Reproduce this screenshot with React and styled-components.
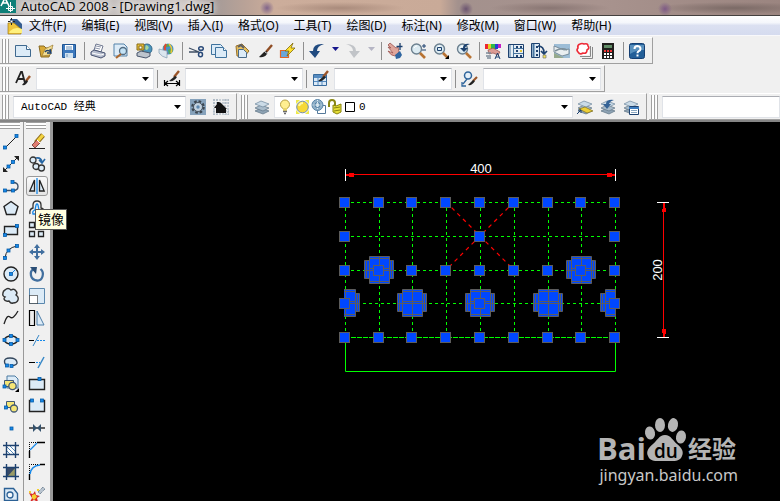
import React from "react";
import styled, { createGlobalStyle, css } from "styled-components";

const UI_FONT = '"Open Sans", "Noto Sans CJK SC", sans-serif';

const GlobalStyle = createGlobalStyle`
  * { box-sizing: border-box; }
  body { margin: 0; background: #f0f0f0; overflow: hidden; }
`;

/* ---------- shell ---------- */

const Window = styled.div`
  display: flex;
  flex-direction: column;
  height: 100vh;
  background: #f0f0f0;
  color: #000;
  font: 12px/18px ${UI_FONT};
`;

const TitleBar = styled.header`
  display: flex;
  align-items: flex-start;
  gap: 5px;
  height: 15px;
  flex: none;
  background:
    radial-gradient(circle at 267px 8px, #80648a 0, transparent 7px),
    radial-gradient(circle at 466px 9px, #6b5470 0, transparent 7px),
    radial-gradient(circle at 665px 9px, #7e5a86 0, transparent 7px),
    radial-gradient(ellipse 65px 6px at 340px 8px, #a98b7c 0, transparent 100%),
    radial-gradient(ellipse 60px 6px at 550px 8px, #897673 0, transparent 100%),
    radial-gradient(ellipse 80px 6px at 735px 8px, #7b6a66 0, transparent 100%),
    linear-gradient(90deg, #bdb9b8 0, #cbc4c1 190px, #a59b98 215px, #b9a297 245px, #ccad9b 275px, #c9aa98 440px, #a3918d 458px, #a8938e 600px, #9b8580 100%);
`;

const TitleIcon = styled.span`
  display: flex;
  align-items: flex-end;
  height: 13px;
  overflow: hidden;
`;

const TitleText = styled.h1`
  margin: 0;
  font: 13px/12px ${UI_FONT};
  white-space: nowrap;
  text-shadow: 0 0 6px #fff, 0 0 8px #fff;
`;

const MenuBar = styled.nav`
  display: flex;
  align-items: center;
  gap: 15px;
  height: 21px;
  flex: none;
  padding-left: 7px;
  border-top: 1px solid #44403f;
  border-bottom: 1px solid #f8f8fb;
  background: linear-gradient(#fff 0, #f4f6fb 35%, #dbe0f1 50%, #d5dbef 100%);
`;

const MenuButton = styled.button`
  border: 0;
  padding: 0;
  background: none;
  font: 12px/16px "Noto Sans", "Noto Sans CJK SC", sans-serif;
  white-space: nowrap;
`;

const DocIcon = styled.span`
  display: flex;
  margin-right: -9px;
`;

const ToolRows = styled.div`
  display: flex;
  flex-direction: column;
  gap: 1px;
  flex: none;
  padding-top: 1px;
  border-bottom: 2px solid #858585;
`;

const ToolRow = styled.div`
  display: flex;
  gap: 2px;
  height: 27px;
`;

const ToolBar = styled.div`
  display: flex;
  align-items: center;
  padding-left: 2px;
  padding-right: ${(p) => p.$end || 0}px;
  border-top: 1px solid #fff;
  border-bottom: 1px solid #a0a0a0;
  border-right: 1px solid #a0a0a0;
  ${(p) => p.$grow && css`flex: 1; border-right: 0;`}
`;

const Grip = styled.span`
  flex: none;
  width: 7px;
  height: 24px;
  margin-right: ${(p) => p.$gap}px;
  border: solid #a0a0a0;
  border-width: 0 1px;
  background: linear-gradient(90deg, #fff 2px, #a0a0a0 2px, #a0a0a0 3px, #f0f0f0 3px, #fff 4px);
`;

const ToolButton = styled.button`
  display: flex;
  flex: none;
  width: ${(p) => p.$w || 23}px;
  height: 20px;
  padding: 2px 0;
  border: 0;
  background: none;
`;

const Separator = styled.span`
  flex: none;
  width: 1px;
  height: 18px;
  margin-right: ${(p) => p.$gap || 5}px;
  background: #8f8f8f;
`;

const Combo = styled.label`
  display: flex;
  align-items: center;
  flex: none;
  width: ${(p) => p.$w}px;
  height: 22px;
  padding-left: ${(p) => p.$pad || 0}px;
  margin-right: ${(p) => p.$gap || 0}px;
  border: 1px solid #e0e3e8;
  border-top-color: #abadb3;
  background: #fff;
  ${(p) => p.$grow && css`flex: 1; width: auto;`}
`;

const Select = styled.select`
  flex: 1;
  min-width: 0;
  height: 20px;
  padding: 0;
  border: 0;
  outline: 0;
  appearance: none;
  background: transparent;
  color: #000;
  font: 11px/18px "Liberation Mono", "Noto Sans CJK SC", monospace;
`;

const Arrow = styled.svg`
  flex: none;
  width: 7px;
  height: 4px;
  margin-right: 4px;
  pointer-events: none;
`;

const Workspace = styled.main`
  display: flex;
  flex: 1;
  min-height: 0;
`;

const Palette = styled.div`
  display: flex;
  flex-direction: column;
  flex: none;
  width: ${(p) => p.$w}px;
  padding-left: ${(p) => p.$pad}px;
  overflow: hidden;
  border-right: ${(p) => p.$edge}px solid #999;
`;

const PaletteGrip = styled.span`
  flex: none;
  width: 20px;
  height: 7px;
  margin-bottom: 2px;
  border: solid #a0a0a0;
  border-width: 1px 0;
  background: linear-gradient(#fff 2px, #a0a0a0 2px, #a0a0a0 3px, #fff 3px);
`;

const PaletteButton = styled.button`
  position: relative;
  display: flex;
  align-items: center;
  justify-content: center;
  flex: none;
  width: 22px;
  height: 22px;
  padding: 0;
  border: 1px solid transparent;
  border-radius: 3px;
  background: none;
  ${(p) => p.$hot && css`
    height: 20px;
    margin: 1px 0;
    border-color: #9a9a9a;
    background: linear-gradient(#fafafa, #e4e4e4);
  `}
`;

const Tooltip = styled.span`
  position: absolute;
  z-index: 2;
  left: 8px;
  top: 32px;
  padding: 0 2px;
  border: 1px solid #555;
  background: #ffffe1;
  font: 13px/19px ${UI_FONT};
  white-space: nowrap;
`;

const ModifyPalette = styled(Palette)`
  overflow: visible;
`;

const Canvas = styled.section`
  position: relative;
  flex: 1;
  min-width: 0;
  overflow: hidden;
  background: #000;
`;

const Drawing = styled.svg`
  display: block;
  width: 100%;
  height: 100%;
`;

const Watermark = styled.div`
  position: absolute;
  right: 42px;
  bottom: 14px;
  color: #c8c8c8;
  font: 16px/24px "Noto Sans", sans-serif;
`;

const WatermarkLogo = styled.svg`
  display: block;
  width: 138px;
  height: 46px;
  overflow: visible;
`;

/* ---------- icons ---------- */

const N = "#1d416f";
const B = "#1688e8";
const K = "#222";
const P = "#dcebf7";

const Dot = ({ x, y }) => <rect x={x - 1.5} y={y - 1.5} width="3" height="3" fill={B} stroke="#075ca8" strokeWidth=".8" />;

const lens = (
  <>
    <circle cx="6.5" cy="6" r="5" fill="#dcebf2" stroke="#6b7f8e" strokeWidth="1.4" />
    <path d="M10 10l5 5" stroke="#b87333" strokeWidth="2.6" />
    <path d="M4 5q1-2 3-2" fill="none" stroke="#fff" />
  </>
);
const brush = (
  <>
    <path d="M15 2l-6 7" stroke="#8f4d24" strokeWidth="2.4" />
    <path d="M10 8l-3 1q-2 2-5 5q5 1 8-3z" fill="#222" />
    <path d="M8 9l3 2" stroke="#c8c8c8" />
  </>
);
const sheets = (
  <>
    <path d="M1 12l6-3 8 3-6 3z" fill="#8ea3b4" stroke="#5f7485" strokeWidth=".7" />
    <path d="M1 9l6-3 8 3-6 3z" fill="#a9bccb" stroke="#5f7485" strokeWidth=".7" />
    <path d="M1 5l6-3 8 3-6 3z" fill="#cbdbe7" stroke="#6d879c" strokeWidth=".7" />
  </>
);
const hatchFrame = <path d="M3.500 0v16M12.500 0v16M0 3.500h16M0 12.500h16" stroke={N} strokeWidth="1.4" />;

const ICONS = {
  acad: <><path d="M0 0h16v16H0z" fill="#0e7f78" /><path d="M1 9l4-8 4 8M3 6h5" stroke="#fff" fill="none" strokeWidth="1.6" /><path d="M10.500 5v10M6 11.500h9M8.500 9.500h4v4h-4z" stroke="#fff" fill="none" /></>,
  doc: <><path d="M3 1h7l5 5v9H3z" fill="#345c90" /><path d="M1 5h6l7 6v5H1z" fill="#efc43a" stroke="#a17b1d" strokeWidth=".7" /><path d="M3 13q5-5 12-2v4H2z" fill="#fff07d" /><path d="M4.500 0v7M1 3.500h7" stroke="#222" /><path d="M3.500 2.500h2v2h-2z" fill="#fff" /></>,
  new: <><path d="M.5 2.500h11l4 4v7H.5z" fill={P} stroke="#3f698f" /><path d="M11.500 2.500v4h4" fill="#fff" stroke="#3f698f" /></>,
  open: <><path d="M1 3h5l2 2h6l-3 9H3z" fill="#d8a936" stroke="#886a24" /><path d="M4 13L7 6l8-4-3 10z" fill="#f4df94" stroke="#9a7a30" strokeWidth=".7" /><path d="M7 9q2-3 6 0M12 6l1 4-4 0" fill="none" stroke={N} strokeWidth="1.4" /></>,
  save: <><path d="M1.500 1.500h13v13h-13z" fill="#3d79bd" stroke="#205593" /><path d="M4 2h8v5H4z" fill="#fff" /><path d="M4 10h8v5H4z" fill="#d1e2ef" /><path d="M5 4h6M5 6h6M6 11v3" stroke="#6a91b8" /></>,
  print: <><path d="M4 7l2-6 7 2-2 6z" fill="#fff" stroke="#6f7890" /><path d="M1 9l3-2 11 3v3l-4 2-10-3z" fill="#b6bdce" stroke="#485370" /><path d="M2 10l9 2 3-1" stroke="#fff" fill="none" /><path d="M6 3l5 1M5 5l5 1" stroke="#9199ad" /></>,
  preview: <><path d="M1 1h10l3 3v9H1z" fill={P} stroke="#5583aa" /><circle cx="10" cy="8" r="3.500" fill="#c3e2f5" stroke="#536d83" strokeWidth="1.3" /><path d="M8 11l-5 4" stroke="#ac672d" strokeWidth="2.200" /></>,
  publish: <><circle cx="11" cy="6" r="5" fill="#4b96bd" stroke="#35698b" /><path d="M10 2q5 2 1 5q-3 0-1-5" fill="#a8d79b" /><path d="M1 1h7v6H1z" fill="#e9c43a" stroke="#896a18" /><path d="M3 3h3v3H3z" fill="#fff" stroke="#896a18" /><path d="M1 10l4-2 9 2v3l-4 2-9-2z" fill="#bdc4cd" stroke="#48556c" /></>,
  globe: <><circle cx="9" cy="6" r="5.500" fill="#4591c8" /><path d="M4 4q3-5 8-2-2 3-8 2M9 7q3-3 5 0-1 4-4 4z" fill="#53a85b" /><path d="M7 1q-3 6 1 10" stroke="#e14833" strokeWidth="2" fill="none" /><path d="M10 1q4 4 2 9" stroke="#ebc53c" strokeWidth="1.500" fill="none" /><path d="M0 6l8 2v7q-5-1-8-5z" fill="#dbe6ef" stroke="#819bb0" strokeWidth=".7" /></>,
  cut: <><path d="M1 5l10 4M1 9h10" stroke="#3f4f64" strokeWidth="1.300" /><ellipse cx="13" cy="5.500" rx="2.300" ry="1.800" fill="none" stroke="#294978" strokeWidth="1.500" /><ellipse cx="12.500" cy="11.500" rx="2" ry="2.300" fill="none" stroke="#294978" strokeWidth="1.500" /></>,
  copy: <><path d="M.5 1.500h9l2 2v8H.5z" fill={P} stroke="#3f739e" /><path d="M4.500 4.500h8l3 3v7h-11z" fill={P} stroke="#3f739e" /><path d="M12.500 4.500v3h3" fill="#fff" stroke="#3f739e" /></>,
  paste: <><path d="M2 3l6-2 7 7-5 6-7-1z" fill="#e5bf5e" stroke="#98712d" /><path d="M4 4l3-2 3 3" stroke="#5c5f65" strokeWidth="2" fill="none" /><path d="M4.500 6.500h5l3 3v5h-8z" fill={P} stroke="#4a6b88" /></>,
  brush,
  blockEdit: <><path d="M.5 7.500h8v7h-8z" fill="#6ca6d8" stroke="#e26628" strokeWidth="1.200" /><path d="M13 0L5 8h4l-2 5 8-8h-4z" fill="#ffe12e" stroke="#806a09" strokeWidth=".8" /></>,
  undo: <path d="M15 1Q4 0 4 8H0l6 7 5-7H8Q8 3 15 1z" fill="#214b80" />,
  redo: <path d="M1 1q10 0 10 7h4l-6 7-5-7h4q0-5-7-7z" fill="#c1c4c8" />,
  pan: <><path d="M1 2l3 3-3-1 5 6-5-2q3 5 7 5l4-4-1-5-2 1-6-5-1 1z" fill="#dfa59a" stroke="#9c5450" strokeWidth=".8" /><path d="M8 12l5-4 2 4-2 3-4 1z" fill="#2f65a0" /><path d="M13 0v7M9.500 3.500h6" stroke={N} strokeWidth="1.300" /></>,
  zoom: <>{lens}<path d="M12 3h4M14 1v4M12 7h4" stroke={N} /></>,
  zoomWin: <>{lens}<path d="M4.500 4.500h4v3h-4z" fill="none" stroke={N} /><path d="M16 12v4h-4z" fill="#000" /></>,
  zoomPrev: <>{lens}<path d="M14 1Q7 0 7 5H4l4 4 4-4H9q1-3 5-4z" fill={N} /></>,
  props: <><path d="M0 1h3v5H0z" fill="#ed2630" /><path d="M3 1h3v5H3z" fill="#e2d020" /><path d="M6 1h4v5H6z" fill="#30b94a" /><path d="M10 1h3v5h-3z" fill="#233fd4" /><path d="M13 1h3v4h-3z" fill="#c520c5" /><path d="M3 7l5-2 7 4-2 3-5-2-4 1z" fill="#dc9c94" stroke="#924c48" strokeWidth=".7" /><path d="M10 16l2.500-6L15 16M11 14h3" fill="none" stroke={N} /><path d="M1 10h5M1 13h5M2 15h4" stroke="#7c8a98" strokeWidth="1.500" /></>,
  design: <><path d="M.5 1.500h15v13H.5z" fill="#e6eef5" stroke={N} /><path d="M2 2v12M5.500 2v12M6 5.500h9M6 10.500h9" stroke="#47759f" /><path d="M8 3h2v2H8zM12 3h2v2h-2zM8 7h2v2H8zM8 12h2v2H8zM12 12h2v2h-2z" fill={N} /><path d="M12 7h2v2h-2z" fill="#e6c83c" /></>,
  palettes: <><path d="M.5 .5h8v14h-8z" fill="#dce8f3" stroke={N} /><path d="M2.500 1v13" stroke="#47759f" strokeWidth="2" /><path d="M5 3h2v2H5zM5 7h2v2H5zM5 11h2v2H5z" fill={N} /><path d="M7 3q6 0 6 7M10 8l3 3 3-3" fill="none" stroke={N} strokeWidth="1.700" /><path d="M12 12h3v3h-3z" fill="#f5e455" stroke="#777" strokeWidth=".7" /></>,
  sheetSet: <><path d="M0 1h16v14H0z" fill="#9dbdd6" /><path d="M0 3l10 4 5-1v5l-7 2-8-4z" fill="#e9eef0" stroke="#6f8593" strokeWidth=".9" /><path d="M1 8q7-4 12-1" fill="none" stroke="#7d8f99" strokeWidth="1.500" /><path d="M0 10l10 5H0z" fill="#96a98c" /></>,
  markup: <><path d="M5 15.500h10.500V4M3 13.500h10.500V3" fill="none" stroke="#888" /><path d="M2 12h10V2" fill="#fff" /><path d="M3 1q2-1 4 0 4-1 4 2 2 2-1 4 0 4-4 3-3 2-5-1-2-2 0-4-1-3 2-4z" fill="#fff" stroke="#ed2a36" strokeWidth="1.600" /></>,
  calc: <><path d="M2 0h12v16H2z" fill="#201f1d" /><path d="M4 2h8v3H4z" fill="#618d67" /><path d="M4 8h8" stroke="#ef3535" strokeWidth="2" strokeDasharray="2 1" /><path d="M4 11h8M4 14h8" stroke="#fff" strokeWidth="2" strokeDasharray="2 1" /></>,
  help: <><rect x=".5" y=".5" width="15" height="15" rx="2" fill="#235f98" stroke="#153f73" /><path d="M1 2h14v5q-8 0-14 4z" fill="#5890bd" /><path d="M5.500 6q0-3 3-3 3 .3 3 3 0 1.500-2 2.300-1 .5-1 2" fill="none" stroke="#fff" strokeWidth="2" /><path d="M7.500 11.500h2v2h-2z" fill="#fff" /></>,
  textStyle: <><path d="M1 12L6 1h1l3 11M3 8h6" fill="none" stroke="#222" strokeWidth="1.800" /><path d="M15 5l-4 5" stroke="#9b5529" strokeWidth="2.400" /><path d="M11 9l2 1q-2 5-6 4z" fill="#222" /></>,
  dimStyle: <><path d="M15 0l-5 6" stroke="#9b5529" strokeWidth="2.400" /><path d="M11 5l2 1q-3 5-8 4z" fill="#222" /><path d="M.5 9v6M15.500 9v6M1 12.500h14M4 10l-3 2.500L4 15M12 10l3 2.500-3 2.500" stroke="#000" fill="none" strokeWidth="1.200" /></>,
  tableStyle: <><path d="M.5 3.500h13v11H.5z" fill="#dceaf6" stroke="#386b9c" /><path d="M1 4h12v3H1z" fill="#568bc0" /><path d="M1 10.500h12M5 7v7M9 7v7" stroke="#568bc0" /><path d="M15 0l-5 6" stroke="#9b5529" strokeWidth="2.400" /><path d="M11 5l2 1q-3 5-8 4z" fill="#222" /></>,
  leaderStyle: <><circle cx="6" cy="4.500" r="3.500" fill="#e4eff8" stroke="#2f659b" strokeWidth="1.500" /><path d="M5 8L1 13M0 11v4h4" stroke="#2f659b" fill="none" strokeWidth="1.300" /><path d="M15 6l-4 4" stroke="#9b5529" strokeWidth="2.200" /><path d="M11 9l2 1q-3 5-7 4z" fill="#222" /></>,
  gear: <><path d="M0 0h16v16H0z" fill="#86a2bb" /><circle cx="8" cy="8" r="5.500" fill="none" stroke="#3b4650" strokeWidth="2.600" strokeDasharray="2.500 1.800" /><circle cx="8" cy="8" r="4.500" fill="#c2d2df" stroke="#48545f" /><circle cx="8" cy="8" r="1.700" fill="#5d88b0" /></>,
  home: <><path d="M1 0v16M4 0v16M12 0v16M15 0v16M0 1h16M0 4h16M0 12h16M0 15h16" stroke="#9cabb8" strokeDasharray="2 1" /><path d="M1 9l3-4V3h2l2 1 6 6h-1v4H3V9z" fill="#111" /></>,
  layers: sheets,
  layerCurrent: <>{sheets}<path d="M2 10l6-2 8 4-6 2z" fill="#edcf37" stroke="#80701c" strokeWidth=".7" /><path d="M0 15l4-4M1 11h3v3" stroke={N} fill="none" /></>,
  layerPrev: <>{sheets}<path d="M14 1Q6 0 6 5H3l4 5 4-5H9q1-3 5-4z" fill="#356396" /></>,
  layerState: <>{sheets}<path d="M6.500 7.500h9v8h-9z" fill="#fff" stroke={N} /><path d="M6 8h10v2H6z" fill="#3d7dbf" /><path d="M8 11.500h6M8 13.500h6" stroke="#8ba8c2" /></>,
  bulb: <><circle cx="6" cy="5.500" r="4.500" fill="#ffef91" stroke="#b6a044" /><path d="M4 9h4v3H4z" fill="#e7d56d" /><path d="M4 12.500h4M5 14.500h2" stroke="#6c6c6c" strokeWidth="1.500" /></>,
  sun: <><path d="M1 1h4L1 5zM14 1v4l-4-4zM1 15v-4l4 4zM14 15h-4l4-4z" fill="#ede94a" /><circle cx="7.500" cy="8" r="5.800" fill="#f6d936" stroke="#718eaa" /><path d="M4 7q1-3 4-3" stroke="#fff8a6" strokeWidth="2" fill="none" /></>,
  freeze: <><path d="M6.500 6.500h8v8h-8z" fill="#fff" stroke="#54799a" /><circle cx="6.500" cy="6" r="5.500" fill="#91b0c7" stroke="#5985a8" /><circle cx="6.500" cy="6" r="2.500" fill="#cddce5" stroke="#4b7ba2" /><path d="M6.500 1v10M1.500 6h10" stroke="#e0edf5" strokeDasharray="1 1" /></>,
  lock: <><path d="M2 8V4q0-3 3-3t3 3v3" fill="none" stroke="#8a8714" strokeWidth="2" /><path d="M6 6l3 1 5-2v8l-4 2-4-2z" fill="#e6df38" stroke="#88830e" /><path d="M7 9l6-1M7 12l6-1" stroke="#88830e" /></>,
  swatch: <path d="M2.500 3.500h9v9h-9z" fill="#fff" stroke="#000" />,

  line: <><path d="M2 14L14 2" stroke={K} /><Dot x={2} y={13.500} /><Dot x={13.500} y={2} /></>,
  xline: <><path d="M1 15L15 1" stroke={K} /><path d="M0 16v-5l5 5zM16 0v5l-5-5z" fill={K} /><Dot x={5.500} y={10.500} /><Dot x={10} y={6} /></>,
  pline: <><path d="M2 12.500h8q5 0 5-4t-5-4" fill="none" stroke="#39506a" strokeWidth="1.400" /><Dot x={2} y={12.500} /><Dot x={10} y={12.500} /><Dot x={9.500} y={4} /></>,
  polygon: <path d="M8 1.500l7 5-2.500 8h-9L1 6.500z" fill={P} stroke={K} strokeWidth="1.400" />,
  rect: <><path d="M1.500 4.500h13v8h-13z" fill={P} stroke={K} strokeWidth="1.400" /><Dot x={14} y={4} /><Dot x={2} y={13} /></>,
  arc: <><path d="M2 14Q3 4 14 2" fill="none" stroke={K} /><Dot x={2} y={14} /><Dot x={5.500} y={6.500} /><Dot x={14} y={2} /></>,
  circle: <><circle cx="8" cy="8" r="7" fill={P} stroke={K} strokeWidth="1.400" /><path d="M8 8l4-4" stroke={B} /><Dot x={8} y={8} /></>,
  cloud: <path d="M2 2Q5-1 8 2q3-2 5 1 2 2 0 4 3 2 2 5-1 3-5 3-2 1-4-2-4 1-5-2 0-1 1-2-3-1-2-4 0-2 2-3z" fill={P} stroke="#333" strokeWidth="1.400" />,
  spline: <path d="M1 14Q4 4 7 7t8-6" fill="none" stroke={K} strokeWidth="1.300" />,
  ellipse: <><ellipse cx="8" cy="8" rx="6.500" ry="4" fill={P} stroke={K} strokeWidth="1.400" /><Dot x={1.500} y={8} /><Dot x={14.500} y={8} /><Dot x={8} y={4} /><Dot x={8} y={12} /></>,
  ellipseArc: <><path d="M8 12q7-1 6-4-1-4-7-4T1.500 8q0 2 2 3" fill={P} stroke="#34475c" strokeWidth="1.400" /><Dot x={4} y={11.500} /><Dot x={8.500} y={12} /></>,
  insert: <><path d="M4 0h8l3 3v9H4z" fill={P} stroke="#4b7ba2" /><path d="M1.500 4.500h9v6h-9z" fill="#f5e676" stroke="#425974" /><circle cx="9.500" cy="10" r="3.700" fill="#f5e676" stroke="#425974" strokeWidth="1.300" /><Dot x={1.500} y={10.500} /><path d="M16 12v4h-4z" fill="#000" /></>,
  block: <><path d="M3.500 3.500h8v6h-8z" fill="#f5e676" stroke="#425974" /><circle cx="11" cy="10.500" r="3.500" fill="#f5e676" stroke="#425974" strokeWidth="1.300" /><Dot x={3} y={9.500} /></>,
  point: <Dot x={8.500} y={8.500} />,
  hatch: <><path d="M3 3h10v10H3z" fill="#fff" /><path d="M4 9l4 4M4 5l8 8M7 4l6 6" stroke="#5489b8" />{hatchFrame}</>,
  gradient: <><path d="M3 3h10v10H3z" fill="#374a68" /><path d="M13 3v10H4z" fill="#9a9b65" />{hatchFrame}</>,
  region: <><path d="M1.500 2.500h9l4 5v7h-13z" fill={P} stroke="#2c6195" strokeWidth="1.400" /><circle cx="7" cy="9" r="3" fill="#f4f8fb" stroke="#2c6195" strokeWidth="1.300" /></>,
  erase: <><path d="M0 14.500h16" stroke={K} /><path d="M14 1l-7 8" stroke="#8e6a19" strokeWidth="5" /><path d="M14 1l-7 8" stroke="#f3d33f" strokeWidth="3.300" /><path d="M8 6L3 11l3 3 5-5z" fill="#df7c70" stroke="#844d47" /><path d="M8 6l3 3" stroke="#fff" /></>,
  copyObj: <><circle cx="4" cy="4" r="3" fill={P} stroke="#333" strokeWidth="1.300" /><circle cx="7" cy="10.500" r="3" fill={P} stroke="#333" strokeWidth="1.300" /><circle cx="12.500" cy="12" r="3" fill={P} stroke="#333" strokeWidth="1.300" /><path d="M7 2q5-1 6 4M10 4l3 3 3-4" fill="none" stroke="#2766a3" strokeWidth="1.600" /></>,
  mirror: <><path d="M5.500 2v11H.8z" fill={P} stroke={K} strokeWidth="1.300" /><path d="M10.500 2v11h4.700z" fill={P} stroke={K} strokeWidth="1.300" /><path d="M8 0v16" stroke={B} strokeWidth="1.300" /></>,
  offset: <><path d="M1 14q-1-5 3-6V5q0-4 4-4t4 4v3q4 1 3 6" fill="none" stroke="#333" strokeWidth="1.300" /><path d="M4 14q-1-3 2-4l1-5q1-2 2 0l1 5q3 1 2 4z" fill="none" stroke={B} strokeWidth="1.300" /></>,
  array: <path d="M.5 .5h5v5h-5zM9.500 .5h5v5h-5zM.5 9.500h5v5h-5zM9.500 9.500h5v5h-5z" fill={P} stroke={K} strokeWidth="1.300" />,
  move: <path d="M8 0l3 4H9v3h3V5l4 3-4 3V9H9v3h2l-3 4-3-4h2V9H4v2L0 8l4-3v2h3V4H5z" fill="#416f9f" />,
  rotate: <><path d="M11.500 3Q15 6 13.500 10.500T8 14.500Q3 14 2 9.500T4.500 3" fill="none" stroke="#416f9f" strokeWidth="2.300" /><path d="M1 1h7l-1 7z" fill="#294d75" /></>,
  scale: <><path d="M.5 .5h15v15H.5z" fill={P} stroke="#5b88ae" /><path d="M.5 7.500h8v8h-8z" fill="#fff" stroke="#000" strokeDasharray="1 1" /></>,
  stretch: <><path d="M.5 .5h5v15h-5z" fill="#eee" stroke="#000" strokeWidth="1.200" /><path d="M5.500 1v14" stroke="#000" strokeDasharray="1 1" /><path d="M8 1l7 14H8z" fill={P} stroke="#4c7da8" /></>,
  trim: <><path d="M0 8.500h5" stroke="#000" /><path d="M8 8.500h8" stroke={B} strokeDasharray="2 1" /><path d="M4 14L10 3" stroke="#3687c7" /></>,
  extend: <><path d="M0 8.500h6" stroke="#000" /><path d="M7 8.500h4" stroke={B} strokeDasharray="2 1" /><path d="M9 14L15 3" stroke="#3687c7" strokeWidth="1.500" /></>,
  breakPt: <><path d="M.5 3.500h15v10H.5z" fill={P} stroke={K} strokeWidth="1.400" /><Dot x={10.500} y={3} /></>,
  breakObj: <><path d="M3 2.500H.5v11h15v-11H13" fill={P} stroke={K} strokeWidth="1.400" /><Dot x={3} y={2.500} /><Dot x={13} y={2.500} /></>,
  join: <><path d="M0 8h16" stroke="#222" strokeWidth="1.400" /><path d="M4 4l4 4-4 4zM12 4L8 8l4 4z" fill="#35536e" /></>,
  chamfer: <><path d="M.5 9V.5H9" fill="none" stroke="#000" strokeDasharray="1 1" /><path d="M.5 9v7M8 .5h8" stroke="#000" strokeWidth="1.400" /><path d="M1 8l7-7" stroke={B} strokeWidth="1.300" /></>,
  fillet: <><path d="M.5 9V.5H9" fill="none" stroke="#000" strokeDasharray="1 1" /><path d="M.5 10v6M11 .5h5" stroke="#000" strokeWidth="1.400" /><path d="M1 10Q2 2 11 1" fill="none" stroke={B} strokeWidth="1.600" /></>,
  explode: <><path d="M9 6l5-5 2 2-5 5z" fill="#b9c4cf" stroke="#556b7e" strokeDasharray="1 1" /><path d="M0 7l4 1 2-3 1 4 4 1-3 2 1 4-4-2-4 2 2-4z" fill="#d92827" /><path d="M3 9l3-1 2 3-3 3-2-2zM0 5h2v2H0zM8 3h2v2H8z" fill="#f3ce2d" /></>,
};

const IconSvg = styled.svg`
  display: block;
  flex: none;
  width: 16px;
  height: 16px;
  overflow: visible;
`;
const Icon = ({ name }) => <IconSvg viewBox="0 0 16 16" aria-hidden="true">{ICONS[name]}</IconSvg>;

/* ---------- controls ---------- */

const DownArrow = ({ fill = "#000" }) => <Arrow viewBox="0 0 7 4" aria-hidden="true"><path d="M0 0h7L3.500 4z" fill={fill} /></Arrow>;

const ComboBox = ({ label, value = "", icons = [], arrow = true, ...size }) => (
  <Combo {...size}>
    {icons.map((n) => <Icon key={n} name={n} />)}
    <Select aria-label={label} defaultValue={value}><option value={value}>{value}</option></Select>
    {arrow && <DownArrow />}
  </Combo>
);

const DropButton = styled.button`
  display: flex;
  align-items: center;
  flex: none;
  width: 13px;
  height: 16px;
  padding: 0 4px 4px 0;
  border: 0;
  background: none;
`;

const MENUS = ["文件(F)", "编辑(E)", "视图(V)", "插入(I)", "格式(O)", "工具(T)", "绘图(D)", "标注(N)", "修改(M)", "窗口(W)", "帮助(H)"];

const STANDARD = [
  "new", "open", "save", "|", "print", "preview", "publish", "globe", "|",
  "cut", "copy", "paste", "brush", "blockEdit", "|", "undo", "v#16168c", "redo", "v#b5b5c4", "|",
  "pan", "zoom", "zoomWin", "zoomPrev", "|",
  "props", "design", "palettes", "sheetSet", "markup", "calc", "|", "help",
];

const STYLES = [["textStyle", "文字样式"], ["dimStyle", "标注样式"], ["tableStyle", "表格样式"], ["leaderStyle", "多重引线样式"]];

const DRAW = ["line", "xline", "pline", "polygon", "rect", "arc", "circle", "cloud", "spline", "ellipse", "ellipseArc", "insert", "block", "point", "hatch", "gradient", "region"];
const MODIFY = ["erase", "copyObj", "mirror", "offset", "array", "move", "rotate", "scale", "stretch", "trim", "extend", "breakPt", "breakObj", "join", "chamfer", "fillet", "explode"];

function StandardItem({ id }) {
  if (id === "|") return <Separator />;
  if (id[0] === "v") return <DropButton aria-label="列表"><DownArrow fill={id.slice(1)} /></DropButton>;
  return <ToolButton aria-label={id}><Icon name={id} /></ToolButton>;
}

/* ---------- drawing ---------- */

const XS = [345, 379, 412, 446, 480, 514, 548, 581, 615];
const YS = [202, 236, 270, 303, 337];
const GRIPS = [
  ...XS.map((x) => [x, 202]),
  [345, 236], [480, 236], [615, 236],
  ...XS.map((x) => [x, 270]),
  [345, 303], [480, 303], [615, 303],
  ...XS.map((x) => [x, 337]),
];
const FLOWERS = [[379, 270], [581, 270], [345, 303], [412, 303], [480, 303], [548, 303], [615, 303]];

const Flower = ({ x, y }) => (
  <g transform={`translate(${x} ${y})`} fill="#0047ff" stroke="#5c5c5c">
    <path d="M-14.500-9.500h29v18h-29z" />
    <path d="M-12.500-9v18M12.500-9v18" />
    <path d="M-9.500-13.500h20v27h-20z" />
    <path d="M-9-11.500H10M-9 11.500H10M.5-13v26M-14 .5h28M-9-1.500H10" />
  </g>
);

const Plan = () => (
  <Drawing role="img" aria-label="Drawing1.dwg">
    <defs>
      <clipPath id="outline"><rect x="344" y="200" width="272" height="140" /></clipPath>
    </defs>
    <g transform="translate(-53 -122)">
      <g stroke="#00ff00" fill="none" strokeDasharray="3 3">
        {XS.map((x) => <path key={x} d={`M${x}.5 202V337`} />)}
        {YS.slice(0, 4).map((y) => <path key={y} d={`M345 ${y}.5H615`} />)}
        <path d="M345 337.500H615" strokeDasharray="5 1" />
      </g>
      <path d="M345.500 337V371.500H615.500V337" fill="none" stroke="#00ff00" />
      <path d="M446 202L514 270M514 202L446 270" stroke="#ff0000" strokeWidth="1.200" strokeDasharray="4 4" />
      <g clipPath="url(#outline)">{FLOWERS.map(([x, y]) => <Flower key={`${x}-${y}`} x={x} y={y} />)}</g>
      <g fill="#0047ff" stroke="#5c5c5c">
        {GRIPS.map(([x, y]) => <rect key={`${x}-${y}`} x={x - 5.5} y={y - 4.5} width="10" height="10" />)}
      </g>
      <path d="M345 174.500H615M663.500 203V337" stroke="#ff0000" />
      <path d="M345 174h4v-1h5v4h-5v-1h-4zM616 174h-4v-1h-5v4h5v-1h4zM663 203v6h-1v3h4v-4h-1v-5zM663 338v-5h-1v-4h4v5h-1v4z" fill="#ff0000" />
      <path d="M345.500 169V181M615.500 169V181M657 202.500H669M657 337.500H669" stroke="#fff" />
      <g fill="#fff" fontFamily="Liberation Sans, sans-serif" fontSize="13" textAnchor="middle">
        <text x="481" y="173">400</text>
        <text transform="translate(662 270) rotate(-90)">200</text>
      </g>
    </g>
  </Drawing>
);

const Brand = () => (
  <Watermark>
    <WatermarkLogo viewBox="0 0 138 46" fill="#b4b4b4" aria-label="Baidu 经验">
      <text x="-2" y="43" fontFamily="Open Sans, sans-serif" fontWeight="700" fontSize="31">Bai</text>
      <ellipse cx="51" cy="16" rx="5" ry="6.500" transform="rotate(-10 51 16)" />
      <ellipse cx="61" cy="8" rx="5" ry="7" />
      <ellipse cx="74" cy="8" rx="5" ry="7" transform="rotate(12 74 8)" />
      <ellipse cx="82" cy="20" rx="5" ry="6.500" transform="rotate(10 82 20)" />
      <path d="M66 18c6 0 8 6 12 9 5 4 7 8 5 12-2 6-9 5-17 5s-15 1-17-5c-2-4 0-8 5-12 4-3 6-9 12-9z" />
      <text x="55" y="41" fill="#000" fontFamily="Open Sans, sans-serif" fontWeight="600" fontSize="19">du</text>
      <text x="89" y="41" fontFamily="Noto Sans CJK SC, sans-serif" fontWeight="700" fontSize="24">经验</text>
    </WatermarkLogo>
    jingyan.baidu.com
  </Watermark>
);

export default function App() {
  return (
    <Window>
      <GlobalStyle />
      <TitleBar>
        <TitleIcon><Icon name="acad" /></TitleIcon>
        <TitleText>AutoCAD 2008 - [Drawing1.dwg]</TitleText>
      </TitleBar>
      <MenuBar>
        <DocIcon><Icon name="doc" /></DocIcon>
        {MENUS.map((m) => <MenuButton key={m}>{m}</MenuButton>)}
      </MenuBar>
      <ToolRows>
        <ToolRow>
          <ToolBar>
            <Grip $gap={6} />
            {STANDARD.map((id, i) => <StandardItem key={i} id={id} />)}
          </ToolBar>
        </ToolRow>
        <ToolRow>
          <ToolBar $end={3}>
            <Grip $gap={6} />
            {STYLES.map(([id, label], i) => (
              <React.Fragment key={id}>
                {i > 0 && <Separator $gap={6} />}
                <ToolButton $w={21} aria-label={label}><Icon name={id} /></ToolButton>
                <ComboBox label={label} $w={118} $gap={i < 3 ? 3 : 0} />
              </React.Fragment>
            ))}
          </ToolBar>
        </ToolRow>
        <ToolRow>
          <ToolBar>
            <Grip $gap={4} />
            <ComboBox label="工作空间" value="AutoCAD 经典" $w={173} $pad={7} $gap={4} />
            <ToolButton aria-label="工作空间设置"><Icon name="gear" /></ToolButton>
            <ToolButton aria-label="我的工作空间"><Icon name="home" /></ToolButton>
          </ToolBar>
          <ToolBar>
            <Grip $gap={6} />
            <ToolButton $w={20} aria-label="图层特性管理器"><Icon name="layers" /></ToolButton>
            <ComboBox label="图层" value="0" icons={["bulb", "sun", "freeze", "lock", "swatch"]} $w={299} $pad={4} $gap={4} />
            <ToolButton aria-label="置为当前"><Icon name="layerCurrent" /></ToolButton>
            <ToolButton aria-label="上一个图层"><Icon name="layerPrev" /></ToolButton>
            <ToolButton aria-label="图层状态"><Icon name="layerState" /></ToolButton>
          </ToolBar>
          <ToolBar $grow>
            <Grip $gap={4} />
            <ComboBox label="颜色" arrow={false} $grow />
          </ToolBar>
        </ToolRow>
      </ToolRows>
      <Workspace>
        <Palette $w={24} $pad={0} $edge={1}>
          <PaletteGrip />
          {DRAW.map((id) => <PaletteButton key={id} aria-label={id}><Icon name={id} /></PaletteButton>)}
        </Palette>
        <ModifyPalette $w={29} $pad={2} $edge={3}>
          <PaletteGrip />
          {MODIFY.map((id) => (
            <PaletteButton key={id} $hot={id === "mirror"} aria-label={id}>
              <Icon name={id} />
              {id === "mirror" && <Tooltip role="tooltip">镜像</Tooltip>}
            </PaletteButton>
          ))}
        </ModifyPalette>
        <Canvas>
          <Plan />
          <Brand />
        </Canvas>
      </Workspace>
    </Window>
  );
}
